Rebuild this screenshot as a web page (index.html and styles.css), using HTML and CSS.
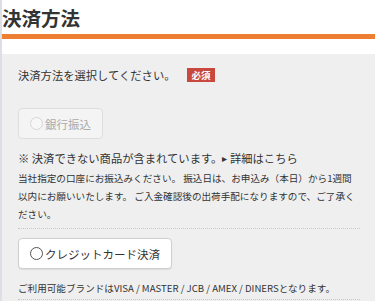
FILE: index.html
```html
<!DOCTYPE html>
<html lang="ja">
<head>
  <meta charset="UTF-8">
  <meta name="viewport" content="width=device-width, initial-scale=1.0">
  <title>決済方法</title>
  <link rel="stylesheet" href="styles.css">
</head>
<body>
  <div class="page">
    <div class="header">
      <h1 class="title">決済方法</h1>
    </div>

    <div class="section">
      <div class="label-row">
        <span class="label">決済方法を選択してください。</span>
        <span class="badge">必須</span>
      </div>

      <div class="method">
        <label class="pay-btn disabled">
          <span class="radio"></span>
          <span>銀行振込</span>
        </label>
        <p class="note">※ 決済できない商品が含まれています。<span class="arrow">▸</span> 詳細はこちら</p>
        <p class="desc">当社指定の口座にお振込みください。 振込日は、お申込み（本日）から1週間以内にお願いいたします。 ご入金確認後の出荷手配になりますので、ご了承ください。</p>
      </div>

      <div class="method">
        <label class="pay-btn">
          <span class="radio"></span>
          <span>クレジットカード決済</span>
        </label>
        <p class="desc brands">ご利用可能ブランドはVISA / MASTER / JCB / AMEX / DINERSとなります。</p>
      </div>
    </div>
  </div>
</body>
</html>
```

FILE: styles.css
```css
body {
  margin: 0;
  padding: 0;
  font-family: "Noto Sans CJK JP", "Noto Sans", sans-serif;
  color: #333;
  background: #fff;
}

.page {
  border-left: 2px solid #dcdfe6;
  min-height: 100vh;
  box-sizing: border-box;
}

.header {
  padding-top: 6px;
  margin-bottom: 15px;
}

.title {
  margin: 0;
  font-size: 19.5px;
  line-height: 23px;
  font-weight: bold;
  color: #333;
  padding-bottom: 5px;
  border-bottom: 5px solid #ee7e31;
}

.section {
  background: #efefef;
  padding: 11px 15px 0 16px;
  min-height: 260px;
}

.label-row {
  display: flex;
  align-items: center;
  height: 20px;
}

.label {
  font-size: 11.3px;
}

.badge {
  margin-left: 12px;
  background: #c8483e;
  color: #fff;
  font-size: 9.5px;
  font-weight: bold;
  line-height: 14px;
  padding: 0 4px;
}

.method {
  border-bottom: 1px dotted #c8c8c8;
}

.label-row + .method {
  margin-top: 23px;
}

.method + .method {
  padding-top: 9px;
}

.pay-btn {
  display: inline-flex;
  align-items: center;
  gap: 2px;
  height: 31px;
  padding: 0 11px 0 11px;
  box-sizing: border-box;
  background: #fff;
  border: 1px solid #cfcfcf;
  border-radius: 4px;
  box-shadow: 0 1px 1px rgba(0, 0, 0, 0.08);
  font-size: 11.5px;
  color: #333;
}

.pay-btn .radio {
  width: 11px;
  height: 11px;
  border: 1px solid #555;
  border-radius: 50%;
  background: #fff;
}

.pay-btn.disabled {
  background: #f4f4f4;
  border-color: #dedede;
  color: #aaa;
  box-shadow: none;
}

.pay-btn.disabled .radio {
  border-color: #d6d6d6;
  background: #f7f7f7;
}

.note {
  margin: 10px 0 0;
  font-size: 11.3px;
  line-height: 18px;
}

.arrow {
  font-size: 10px;
  vertical-align: 1px;
}

.desc {
  margin: 2px 0 0;
  padding-bottom: 5px;
  font-size: 9.6px;
  line-height: 18px;
}

.brands {
  margin-top: 10px;
  padding-bottom: 2px;
}
```
